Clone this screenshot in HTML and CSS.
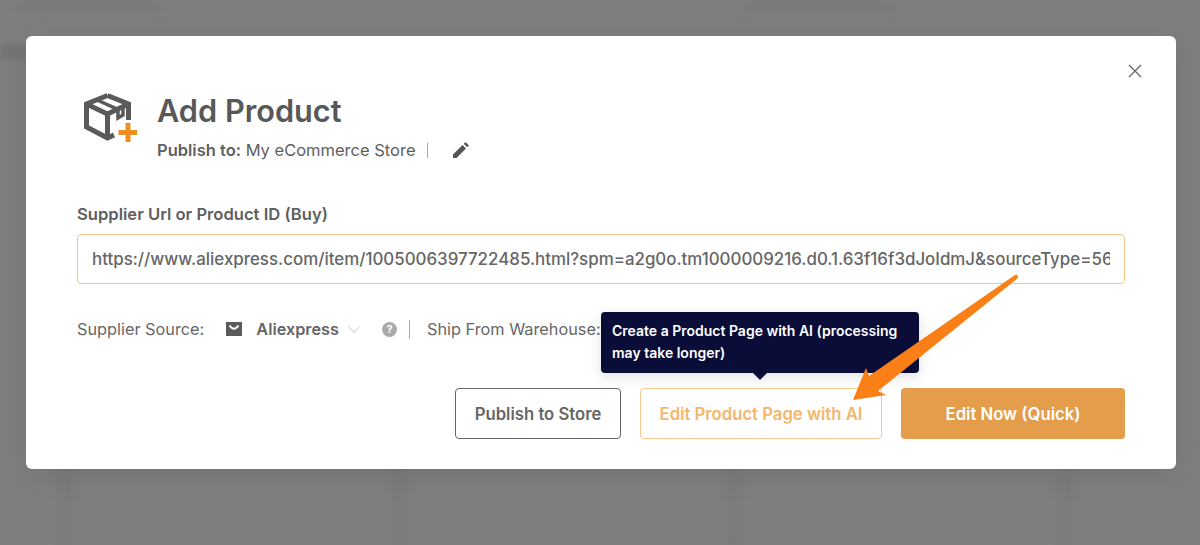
FILE: index.html
```html
<!DOCTYPE html>
<html lang="en">

<head>
    <meta charset="UTF-8">
    <meta name="viewport" content="width=device-width, initial-scale=1.0">
    <title>Add Product</title>
    <link rel="stylesheet" href="styles.css">
</head>

<body>
    <div class="backdrop">
        <div class="back-top">
            <div class="back-text"></div>
            <div class="back-text back-text-right"></div>
        </div>
        <div class="back-label"></div>
        <div class="back-columns">
            <div class="back-col"></div>
            <div class="back-col"></div>
            <div class="back-col"></div>
            <div class="back-col"></div>
        </div>
    </div>

    <div class="overlay">
        <div class="modal">
            <button class="close" aria-label="Close">
                <svg width="14" height="14" viewBox="0 0 14 14">
                    <path d="M1 1L13 13M13 1L1 13" stroke="#666" stroke-width="1.3" fill="none" />
                </svg>
            </button>

            <div class="head">
                <svg class="box-icon" width="54" height="54" viewBox="0 0 54 54">
                    <path d="M24.500 5.500L45.500 14V30M24.500 5.500L3.500 14V37L24.500 48L31 45M3.500 14L24.500 24V48M24.500 24L45.500 14"
                        stroke="#5a5a5a" stroke-width="5" fill="none" />
                    <path d="M14 10L35 19.500V28L40 25V16" stroke="#5a5a5a" stroke-width="3.500" fill="none" />
                    <path d="M45 33V52M35.500 42.500H54" stroke="#ee8f22" stroke-width="5" fill="none" />
                </svg>
                <div class="head-text">
                    <h1>Add Product</h1>
                    <div class="publish">
                        <span><b>Publish to:</b> My eCommerce Store</span>
                        <span class="bar"></span>
                        <svg class="pencil" width="16" height="16" viewBox="0 0 16 16">
                            <path d="M0 16V12.500L9.500 3L13 6.500L3.500 16ZM10.700 1.800L12 .5Q12.500 0 13 .5L15.500 3Q16 3.500 15.500 4L14.200 5.300Z"
                                fill="#555" />
                        </svg>
                    </div>
                </div>
            </div>

            <label class="url-label">Supplier Url or Product ID (Buy)</label>
            <input class="url-input" type="text"
                value="https://www.aliexpress.com/item/1005006397722485.html?spm=a2g0o.tm1000009216.d0.1.63f16f3dJoIdmJ&sourceType=561&aff_fcid=abc">

            <div class="source-row">
                <span>Supplier Source:</span>
                <svg class="bag" width="16" height="16" viewBox="0 0 16 16">
                    <path d="M0 1H16V15H0Z" fill="#5a5a5a" />
                    <path d="M3.500 4.500Q8 11 12.500 4.500" stroke="#fff" stroke-width="2" fill="none" />
                </svg>
                <b class="supplier">Aliexpress</b>
                <svg class="chevron" width="12" height="7" viewBox="0 0 12 7">
                    <path d="M.5 .5L6 6.500L11.500 .5" stroke="#c4c4c4" fill="none" />
                </svg>
                <span class="help">?</span>
                <span class="bar bar-tall"></span>
                <span>Ship From Warehouse:</span>
            </div>

            <div class="actions">
                <button class="btn btn-outline">Publish to Store</button>
                <button class="btn btn-ai">Edit Product Page with AI</button>
                <button class="btn btn-main">Edit Now (Quick)</button>
            </div>

            <div class="tooltip">Create a Product Page with AI (processing may take longer)</div>
        </div>
    </div>

    <svg class="arrow" width="1200" height="545" viewBox="0 0 1200 545">
        <path d="M1015 275Q1018 274 1018 278L878 391L886 395L853 400L866 368L869 376Z" fill="#f97f16" />
    </svg>
</body>

</html>
```

FILE: styles.css
```css
* {
    box-sizing: border-box;
}

body {
    margin: 0;
    width: 1200px;
    height: 545px;
    overflow: hidden;
    position: relative;
    background-color: #7f7f7f;
    font-family: Inter, "Liberation Sans", sans-serif;
    color: #5f5f5f;
}

/* blurred page behind the modal */
.backdrop {
    position: absolute;
    inset: 0;
    filter: blur(4px);
}

.back-top {
    display: flex;
    gap: 580px;
    padding: 3px 0 0 15px;
}

.back-text {
    width: 146px;
    height: 8px;
    background-color: #787878;
}

.back-text-right {
    width: 152px;
}

.back-label {
    width: 30px;
    height: 10px;
    margin-top: 36px;
    background-color: #707070;
}

.back-columns {
    display: flex;
    justify-content: space-between;
    padding: 404px 128px 0 60px;
}

.back-col {
    width: 12px;
    height: 90px;
    background-color: #797a7d;
}

.overlay {
    position: absolute;
    inset: 0;
    padding: 36px 24px 0 26px;
}

.modal {
    position: relative;
    height: 433px;
    padding: 51px 51px 0;
    background-color: #fff;
    border-radius: 6px;
    box-shadow: 0 6px 30px rgba(0, 0, 0, .1);
}

.close {
    position: absolute;
    top: 28px;
    right: 34px;
    display: flex;
    padding: 0;
    border: none;
    background: none;
}

.head {
    display: flex;
    gap: 20px;
}

.box-icon {
    margin: 3px 0 0 6px;
    flex: none;
}

.head-text h1 {
    margin: 6px 0 0;
    font-size: 30.700px;
    line-height: 36px;
    font-weight: 600;
    color: #585858;
}

.publish {
    display: flex;
    align-items: center;
    margin-top: 11px;
    font-size: 16.500px;
    line-height: 20px;
    white-space: nowrap;
}

.publish b {
    font-weight: 600;
}

.bar {
    display: inline-block;
    width: 1px;
    height: 15px;
    margin-left: 11px;
    background-color: #aaa;
}

.pencil {
    margin-left: 25px;
}

.url-label {
    display: block;
    margin-top: 44px;
    font-size: 16.600px;
    line-height: 20px;
    font-weight: 600;
}

.url-input {
    display: block;
    width: 100%;
    height: 50px;
    margin-top: 10px;
    padding: 0 14px;
    border: 1px solid #f5c486;
    border-radius: 4px;
    font-family: inherit;
    font-size: 16.900px;
    font-weight: 500;
    color: #666;
    outline: none;
}

.source-row {
    display: flex;
    align-items: center;
    height: 20px;
    margin-top: 35px;
    font-size: 16.300px;
    color: #666;
    white-space: nowrap;
}

.bag {
    margin-left: 22px;
}

.supplier {
    margin-left: 14px;
    font-weight: 600;
}

.chevron {
    margin-left: 9px;
}

.help {
    width: 15px;
    height: 15px;
    margin-left: 22px;
    border-radius: 50%;
    background-color: #aaa;
    color: #fff;
    font-size: 11px;
    font-weight: 700;
    line-height: 15px;
    text-align: center;
}

.bar-tall {
    height: 19px;
    margin: 0 17px 0 12px;
}

.actions {
    display: flex;
    justify-content: flex-end;
    gap: 19px;
    margin-top: 49px;
}

.btn {
    height: 51px;
    border-radius: 4px;
    font-family: inherit;
    font-size: 16.700px;
    font-weight: 600;
    background-color: #fff;
}

.btn-outline {
    width: 166px;
    border: 1px solid #666;
    color: #666;
}

.btn-ai {
    width: 242px;
    border: 1px solid #f5c98f;
    color: #f2b66d;
}

.btn-main {
    width: 224px;
    border: none;
    background-color: #e49d4a;
    color: #fff;
}

.tooltip {
    position: absolute;
    left: 575px;
    top: 276px;
    width: 318px;
    height: 61px;
    padding: 8px 10px 8px 11px;
    border-radius: 4px;
    background-color: #0a0d38;
    color: #fff;
    font-size: 14px;
    font-weight: 600;
    line-height: 22px;
    box-shadow: 0 4px 14px rgba(0, 0, 0, .12);
}

.tooltip::after {
    content: "";
    position: absolute;
    left: 152px;
    bottom: -7px;
    border-style: solid;
    border-width: 7px 7px 0;
    border-color: #0a0d38 transparent transparent;
}

.arrow {
    position: absolute;
    left: 0;
    top: 0;
}
```
